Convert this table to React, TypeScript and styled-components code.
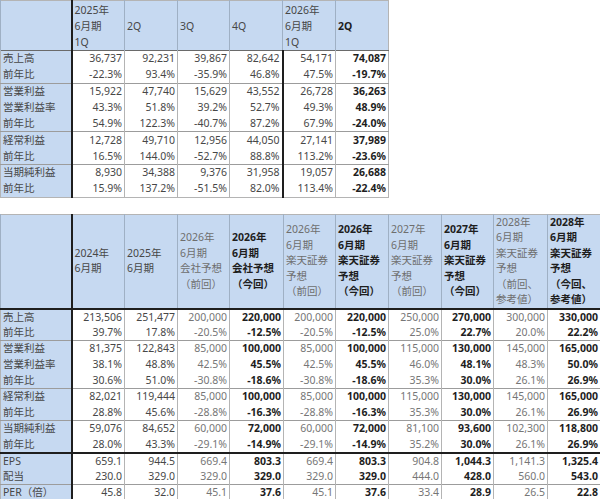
import styled, {createGlobalStyle} from 'styled-components'

const GlobalStyle = createGlobalStyle`
	html, body {
		margin: 0;
		padding: 0;
		background: #ffffff;
	}
	body {
		font-family: 'Noto Sans', 'Noto Sans CJK JP', sans-serif;
		font-size: 10.5px;
		color: #474747;
	}
`

const Page = styled.div`
	width: 600px;
	display: flex;
	flex-direction: column;
	gap: 16px;
`

const Table = styled.table`
	table-layout: fixed;
	border-collapse: collapse;
	width: ${({$w}: {$w: number}) => $w}px;
	border: 1px solid #b4b4b4;
`

const Col = styled.col`
	width: ${({$w}: {$w: number}) => $w}px;
`

const HeadRow = styled.tr`
	height: ${({$h}: {$h: number}) => $h}px;
	border-bottom: ${({$h}: {$h: number}) => ($h > 60 ? '2px solid #1e1e1e' : '1px solid #6a6a6a')};
`

const Row = styled.tr<{$end?: boolean; $heavy?: boolean; $h: number}>`
	height: ${({$h}) => $h}px;
	border-bottom: ${({$end, $heavy}) =>
		$heavy ? '2px solid #1e1e1e' : $end ? '1px solid #9c9c9c' : 'none'};
`

type CellProps = {$bold?: boolean; $dim?: boolean; $thick?: boolean}

const HeadCell = styled.th<CellProps & {$lh: number}>`
	background: #c6d9f1;
	text-align: left;
	vertical-align: middle;
	padding: 0 1px 0 2px;
	font-weight: ${({$bold}) => ($bold ? 700 : 400)};
	color: ${({$bold, $dim}) => ($bold ? '#1e1e1e' : $dim ? '#6e6e6e' : '#474747')};
	line-height: ${({$lh}) => $lh}px;
	border-left: ${({$thick}) => ($thick ? '2px solid #1e1e1e' : '1px solid #9fb0c4')};
	white-space: pre-line;
	overflow: hidden;
`

const LabelCell = styled.td`
	background: #c6d9f1;
	text-align: left;
	padding: 0 2px;
	line-height: 15px;
	color: #474747;
	white-space: nowrap;
	overflow: hidden;
`

const NumCell = styled.td<CellProps>`
	text-align: right;
	padding: 0 2px 0 0;
	line-height: 15px;
	font-weight: ${({$bold}) => ($bold ? 700 : 400)};
	color: ${({$bold, $dim}) => ($bold ? '#1e1e1e' : $dim ? '#767676' : '#474747')};
	border-left: ${({$thick}) => ($thick ? '2px solid #1e1e1e' : '1px solid #b4b4b4')};
	white-space: nowrap;
	overflow: hidden;
`

type Line = {label: string; values: string[]; end?: boolean; heavy?: boolean}

const quarterHeads = [
	{text: '2025年\n6月期\n1Q'},
	{text: '2Q'},
	{text: '3Q'},
	{text: '4Q'},
	{text: '2026年\n6月期\n1Q'},
	{text: '2Q', bold: true},
]

const quarterRows: Line[] = [
	{label: '売上高', values: ['36,737', '92,231', '39,867', '82,642', '54,171', '74,087']},
	{label: '前年比', values: ['-22.3%', '93.4%', '-35.9%', '46.8%', '47.5%', '-19.7%'], end: true},
	{label: '営業利益', values: ['15,922', '47,740', '15,629', '43,552', '26,728', '36,263']},
	{label: '営業利益率', values: ['43.3%', '51.8%', '39.2%', '52.7%', '49.3%', '48.9%']},
	{label: '前年比', values: ['54.9%', '122.3%', '-40.7%', '87.2%', '67.9%', '-24.0%'], end: true},
	{label: '経常利益', values: ['12,728', '49,710', '12,956', '44,050', '27,141', '37,989']},
	{label: '前年比', values: ['16.5%', '144.0%', '-52.7%', '88.8%', '113.2%', '-23.6%'], end: true},
	{label: '当期純利益', values: ['8,930', '34,388', '9,376', '31,958', '19,057', '26,688']},
	{label: '前年比', values: ['15.9%', '137.2%', '-51.5%', '82.0%', '113.4%', '-22.4%']},
]

const yearHeads = [
	{text: '2024年\n6月期'},
	{text: '2025年\n6月期'},
	{text: '2026年\n6月期\n会社予想\n（前回）', dim: true},
	{text: '2026年\n6月期\n会社予想\n（今回）', bold: true},
	{text: '2026年\n6月期\n楽天証券\n予想\n（前回）', dim: true},
	{text: '2026年\n6月期\n楽天証券\n予想\n（今回）', bold: true},
	{text: '2027年\n6月期\n楽天証券\n予想\n（前回）', dim: true},
	{text: '2027年\n6月期\n楽天証券\n予想\n（今回）', bold: true},
	{text: '2028年\n6月期\n楽天証券\n予想\n（前回、\n参考値）', dim: true},
	{text: '2028年\n6月期\n楽天証券\n予想\n（今回、\n参考値）', bold: true},
]

const yearRows: Line[] = [
	{label: '売上高', values: ['213,506', '251,477', '200,000', '220,000', '200,000', '220,000', '250,000', '270,000', '300,000', '330,000']},
	{label: '前年比', values: ['39.7%', '17.8%', '-20.5%', '-12.5%', '-20.5%', '-12.5%', '25.0%', '22.7%', '20.0%', '22.2%'], end: true},
	{label: '営業利益', values: ['81,375', '122,843', '85,000', '100,000', '85,000', '100,000', '115,000', '130,000', '145,000', '165,000']},
	{label: '営業利益率', values: ['38.1%', '48.8%', '42.5%', '45.5%', '42.5%', '45.5%', '46.0%', '48.1%', '48.3%', '50.0%']},
	{label: '前年比', values: ['30.6%', '51.0%', '-30.8%', '-18.6%', '-30.8%', '-18.6%', '35.3%', '30.0%', '26.1%', '26.9%'], end: true},
	{label: '経常利益', values: ['82,021', '119,444', '85,000', '100,000', '85,000', '100,000', '115,000', '130,000', '145,000', '165,000']},
	{label: '前年比', values: ['28.8%', '45.6%', '-28.8%', '-16.3%', '-28.8%', '-16.3%', '35.3%', '30.0%', '26.1%', '26.9%'], end: true},
	{label: '当期純利益', values: ['59,076', '84,652', '60,000', '72,000', '60,000', '72,000', '81,100', '93,600', '102,300', '118,800']},
	{label: '前年比', values: ['28.0%', '43.3%', '-29.1%', '-14.9%', '-29.1%', '-14.9%', '35.2%', '30.0%', '26.1%', '26.9%'], heavy: true},
	{label: 'EPS', values: ['659.1', '944.5', '669.4', '803.3', '669.4', '803.3', '904.8', '1,044.3', '1,141.3', '1,325.4']},
	{label: '配当', values: ['230.0', '329.0', '329.0', '329.0', '329.0', '329.0', '444.0', '428.0', '560.0', '543.0'], end: true},
	{label: 'PER（倍）', values: ['45.8', '32.0', '45.1', '37.6', '45.1', '37.6', '33.4', '28.9', '26.5', '22.8']},
]

const quarterCols = [71, 53, 53, 52, 53, 53, 53]
const yearCols = [71, 53, 53, 52, 54, 52, 53, 53, 52, 54, 53]

export default function App() {
	return (
		<>
			<GlobalStyle />
			<Page>
				<Table $w={389}>
					<colgroup>
						{quarterCols.map((w, i) => (
							<Col key={i} $w={w} />
						))}
					</colgroup>
					<thead>
						<HeadRow $h={50}>
							<HeadCell $lh={16} />
							{quarterHeads.map((h, i) => (
								<HeadCell key={i} $lh={16} $bold={h.bold} $thick={i === 0}>
									{h.text}
								</HeadCell>
							))}
						</HeadRow>
					</thead>
					<tbody>
						{quarterRows.map((r, i) => (
							<Row key={i} $h={16.3} $end={r.end}>
								<LabelCell>{r.label}</LabelCell>
								{r.values.map((v, j) => (
									<NumCell key={j} $bold={j === 5} $thick={j === 0 || j === 4}>
										{v}
									</NumCell>
								))}
							</Row>
						))}
					</tbody>
				</Table>
				<Table $w={600}>
					<colgroup>
						{yearCols.map((w, i) => (
							<Col key={i} $w={w} />
						))}
					</colgroup>
					<thead>
						<HeadRow $h={94}>
							<HeadCell $lh={15.5} />
							{yearHeads.map((h, i) => (
								<HeadCell
									key={i}
									$lh={15.5}
									$bold={h.bold}
									$dim={h.dim}
									$thick={i === 0}
								>
									{h.text}
								</HeadCell>
							))}
						</HeadRow>
					</thead>
					<tbody>
						{yearRows.map((r, i) => (
							<Row key={i} $h={16} $end={r.end} $heavy={r.heavy}>
								<LabelCell>{r.label}</LabelCell>
								{r.values.map((v, j) => (
									<NumCell
										key={j}
										$bold={yearHeads[j].bold}
										$dim={yearHeads[j].dim}
										$thick={j === 0}
									>
										{v}
									</NumCell>
								))}
							</Row>
						))}
					</tbody>
				</Table>
			</Page>
		</>
	)
}
